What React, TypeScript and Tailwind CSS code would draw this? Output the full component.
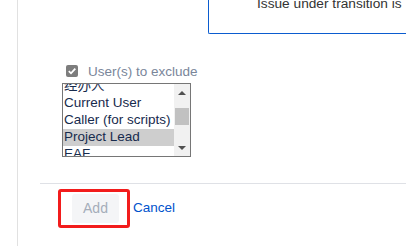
import React from "react";

const items = ["经办人", "Current User", "Caller (for scripts)", "Project Lead", "EAF"];

export default function App() {
  return (
    <div
      className="w-[406px] h-[246px] overflow-hidden bg-white flex"
      style={{ fontFamily: '"Liberation Sans", Arial, "Noto Sans CJK SC", sans-serif' }}
    >
      <div className="w-[17px] shrink-0" />
      <div className="flex-1 border-l border-[#e1e1e1] flex flex-col min-w-0">
        {/* top message box */}
        <div className="ml-[190px] h-[34px] border-l border-b border-[#0b5ccf] rounded-bl-[2px] overflow-hidden shrink-0">
          <div className="pl-[48px] -mt-[4px] text-[13.7px] leading-[16px] text-[#333333] whitespace-nowrap">
            Issue under transition is
          </div>
        </div>

        {/* checkbox row */}
        <div className="mt-[30px] ml-[48px] flex items-start h-[16px]">
          <div className="mt-[1px] w-[12px] h-[12px] rounded-[2px] bg-[#7d7d7d] flex items-center justify-center">
            <svg width="10" height="10" viewBox="0 0 10 10">
              <path d="M1.8 5.2 L4 7.3 L8.3 2.6" fill="none" stroke="#ffffff" strokeWidth="1.8" />
            </svg>
          </div>
          <span className="ml-[10px] text-[13.5px] leading-[16px] text-[#7a869a] whitespace-nowrap">
            User(s) to exclude
          </span>
        </div>

        {/* list box */}
        <div className="mt-[3px] ml-[44px] w-[129px] h-[74px] border border-[#767676] flex overflow-hidden shrink-0">
          <div className="flex-1 overflow-hidden">
            <div className="-mt-[6px]">
              {items.map((it) => (
                <div
                  key={it}
                  className={
                    "h-[17px] pl-[1px] text-[13.5px] leading-[16px] text-[#172b4d] whitespace-nowrap " +
                    (it === "Project Lead" ? "bg-[#cecece]" : "")
                  }
                >
                  {it}
                </div>
              ))}
            </div>
          </div>
          <div className="w-[16px] bg-[#f1f1f1] flex flex-col items-center">
            <div className="h-[16px] w-full flex items-center justify-center">
              <svg width="8" height="5" viewBox="0 0 8 5">
                <path d="M0 5 L4 1 L8 5 Z" fill="#505050" />
              </svg>
            </div>
            <div className="mt-[8px] h-[17px] w-[14px] bg-[#c1c1c1]" />
            <div className="flex-1" />
            <div className="h-[16px] w-full flex items-center justify-center">
              <svg width="8" height="5" viewBox="0 0 8 5">
                <path d="M0 0 L4 4 L8 0 Z" fill="#505050" />
              </svg>
            </div>
          </div>
        </div>

        {/* separator */}
        <div className="mt-[26px] ml-[22px] border-t border-[#dfe1e6]" />

        {/* buttons */}
        <div className="mt-[5px] ml-[40px] flex items-center">
          <div className="border-[3px] border-[#f21c1c] rounded-[3px] pl-[11px] pr-[8px] py-[2px]">
            <div className="w-[47px] h-[29px] bg-[#f4f5f7] rounded-[3px] flex items-center justify-center text-[14px] text-[#a5adba]">
              Add
            </div>
          </div>
          <span className="ml-[3px] text-[13.5px] text-[#0052cc]">Cancel</span>
        </div>
      </div>
    </div>
  );
}
